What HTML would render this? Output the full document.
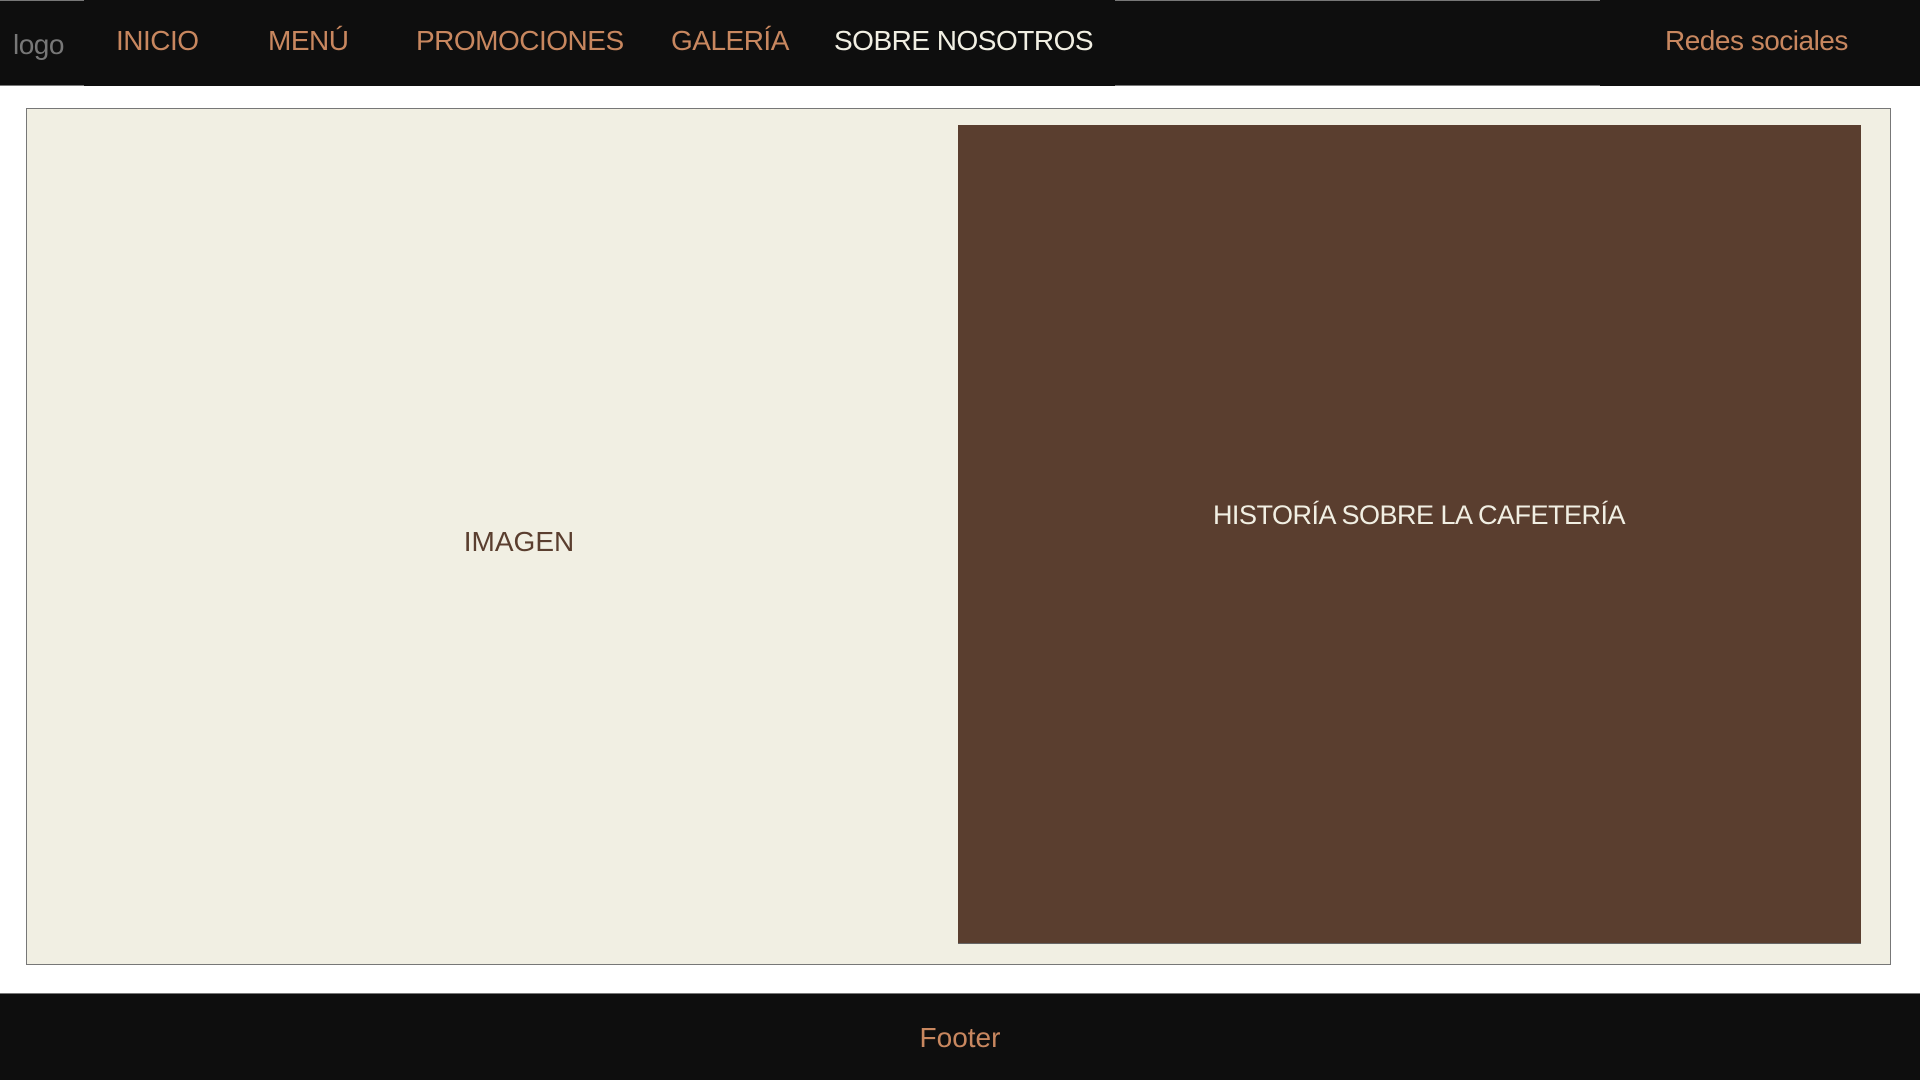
<!DOCTYPE html>
<html><head><meta charset="utf-8"><style>
*{margin:0;padding:0;box-sizing:border-box}
body{width:1920px;height:1080px;background:#fff;position:relative;overflow:hidden;font-family:"Segoe UI","Liberation Sans",sans-serif}
.nav{position:absolute;left:0;top:0;width:1920px;height:86px;background:#0e0e0e}
.t{position:absolute;white-space:nowrap;line-height:1}
.nav .t{top:27px;font-size:28px;color:#c8875f;letter-spacing:-0.5px}
.gl{position:absolute;height:1px;background:#777}
.main{position:absolute;left:26px;top:108px;width:1865px;height:857px;background:#f1efe3;border:1px solid #777}
.brown{position:absolute;left:958px;top:125px;width:903px;height:819px;background:#5a3e2f;border-bottom:1px solid #666}
.foot{position:absolute;left:0;top:993px;width:1920px;height:87px;background:#0e0e0e;border-top:1px solid #777}
</style></head><body>
<div class="nav">
<div class="gl" style="left:0;top:0;width:84px"></div>
<div class="gl" style="left:0;top:85px;width:84px"></div>
<div class="gl" style="left:1115px;top:0;width:485px"></div>
<div class="gl" style="left:1115px;top:85px;width:485px"></div>
<div class="t" style="left:13px;top:31px;color:#777">logo</div>
<div class="t" style="left:116px">INICIO</div>
<div class="t" style="left:268px">MENÚ</div>
<div class="t" style="left:416px">PROMOCIONES</div>
<div class="t" style="left:671px">GALERÍA</div>
<div class="t" style="left:834px;color:#f1efe3">SOBRE NOSOTROS</div>
<div class="t" style="left:1665px">Redes sociales</div>
</div>
<div class="main"></div>
<div class="brown"></div>
<div class="t" style="left:519px;top:528px;transform:translateX(-50%);font-size:28px;color:#5a3e2f">IMAGEN</div>
<div class="t" style="left:1419px;top:502px;transform:translateX(-50%);font-size:27px;letter-spacing:-0.5px;color:#f1efe3">HISTORÍA SOBRE LA CAFETERÍA</div>
<div class="foot"><div class="t" style="left:960px;top:30px;transform:translateX(-50%);font-size:28px;color:#c8875f">Footer</div></div>
</body></html>
